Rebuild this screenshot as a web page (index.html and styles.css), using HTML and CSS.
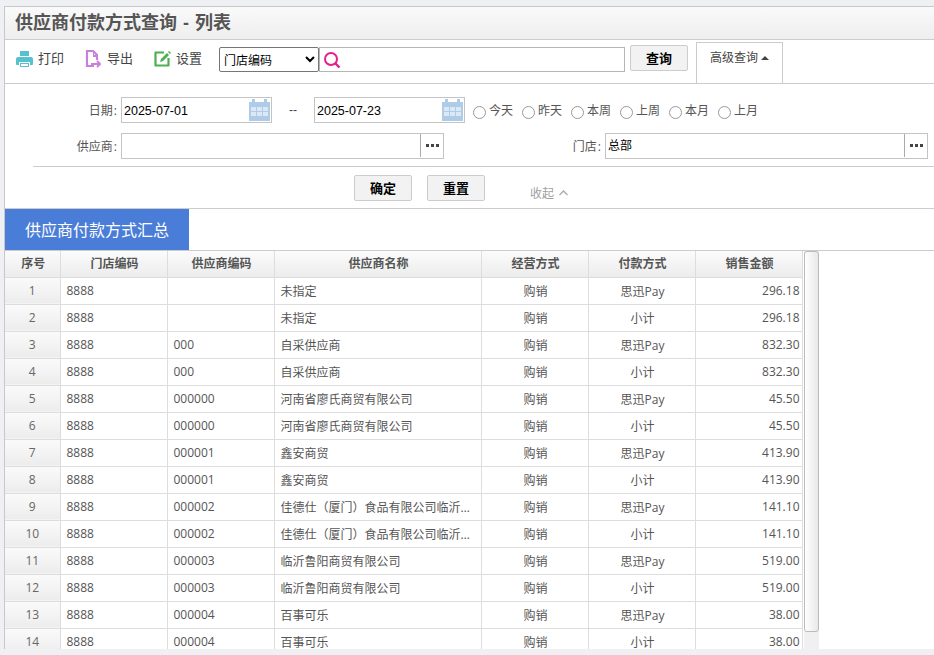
FILE: index.html
```html
<!DOCTYPE html>
<html lang="zh-CN">
<head>
  <meta charset="UTF-8" />
  <title>供应商付款方式查询 - 列表</title>
  <link rel="stylesheet" href="styles.css">
</head>
<body>
  <div class="page">
    <div class="title-bar">供应商付款方式查询 - 列表</div>

    <div class="toolbar">
      <a class="tool tool-print">
        <svg width="17" height="18" viewBox="0 0 17 18"><path fill="#56c2ce" d="M4 1h9v5H4zM2 7h13a2 2 0 0 1 2 2v5a1 1 0 0 1-1 1h-2v-3H3v3H1a1 1 0 0 1-1-1V9a2 2 0 0 1 2-2z"/><path fill="#56c2ce" d="M4 13h9v4H4z"/><path fill="#fff" d="M5 14h7v2H5z"/></svg>
        打印
      </a>
      <a class="tool tool-export">
        <svg width="17" height="18" viewBox="0 0 17 18"><path fill="none" stroke="#c97fdc" stroke-width="2.200" d="M9 16H2V1h6l4 4v5"/><path fill="#c97fdc" d="M8 1h1v4h4v2H8z"/><path fill="none" stroke="#c97fdc" stroke-width="2" d="M6 14h8M12 11l3 3-3 3"/></svg>
        导出
      </a>
      <a class="tool tool-setting">
        <svg width="17" height="18" viewBox="0 0 17 18"><path fill="none" stroke="#4caf50" stroke-width="2.200" stroke-linejoin="round" d="M10 2.500H1.500v13h13V8"/><path fill="#4caf50" d="M6 12l1-3 6-6 2 2-6 6zM14 2l1-1 2 2-1 1z"/></svg>
        设置
      </a>
      <select class="field-select">
        <option>门店编码</option>
      </select>
      <div class="search-box">
        <svg width="18" height="18" viewBox="0 0 18 18"><circle cx="8" cy="8" r="6" fill="none" stroke="#e5208c" stroke-width="2"/><path stroke="#e5208c" stroke-width="2.400" d="M12 12l4.500 4.500"/></svg>
      </div>
      <button class="btn btn-query">查询</button>
      <div class="adv-tab">高级查询<span class="caret"></span></div>
    </div>

    <div class="filter">
      <div class="filter-row row-date">
        <label class="filter-label">日期<span class="colon">:</span></label>
        <div class="date-input">
          2025-07-01
          <svg class="cal" width="21" height="22" viewBox="0 0 21 22"><path fill="#aecce8" d="M0 3h3V0h3v3h9V0h3v3h3v19H0z"/><path fill="#dce9f5" d="M2 8h5v4H2zM8 8h5v4H8zM14 8h5v4h-5zM2 13h5v4H2zM8 13h5v4H8zM14 13h5v4h-5z"/></svg>
        </div>
        <span class="date-sep">--</span>
        <div class="date-input">
          2025-07-23
          <svg class="cal" width="21" height="22" viewBox="0 0 21 22"><path fill="#aecce8" d="M0 3h3V0h3v3h9V0h3v3h3v19H0z"/><path fill="#dce9f5" d="M2 8h5v4H2zM8 8h5v4H8zM14 8h5v4h-5zM2 13h5v4H2zM8 13h5v4H8zM14 13h5v4h-5z"/></svg>
        </div>
        <div class="radios">
          <label class="radio"><input type="radio" name="range">今天</label>
          <label class="radio"><input type="radio" name="range">昨天</label>
          <label class="radio"><input type="radio" name="range">本周</label>
          <label class="radio"><input type="radio" name="range">上周</label>
          <label class="radio"><input type="radio" name="range">本月</label>
          <label class="radio"><input type="radio" name="range">上月</label>
        </div>
      </div>

      <div class="filter-row row-pick">
        <label class="filter-label">供应商<span class="colon">:</span></label>
        <div class="pick-input">
          <span class="pick-text"></span>
          <span class="pick-btn"><svg width="13" height="3" viewBox="0 0 13 3"><path fill="#444" d="M0 0h3v3H0zM5 0h3v3H5zM10 0h3v3h-3z"/></svg></span>
        </div>
        <label class="filter-label label-store">门店<span class="colon">:</span></label>
        <div class="pick-input">
          <span class="pick-text">总部</span>
          <span class="pick-btn"><svg width="13" height="3" viewBox="0 0 13 3"><path fill="#444" d="M0 0h3v3H0zM5 0h3v3H5zM10 0h3v3h-3z"/></svg></span>
        </div>
      </div>

      <div class="filter-actions">
        <button class="btn">确定</button>
        <button class="btn">重置</button>
        <span class="collapse">收起<svg width="9" height="6" viewBox="0 0 9 6"><path fill="none" stroke="#aaa" stroke-width="1.300" d="M.5 5l4-4 4 4"/></svg></span>
      </div>
    </div>

    <div class="tab-bar"><div class="tab-active">供应商付款方式汇总</div></div>

    <div class="grid-wrap">
      <table class="grid">
        <colgroup>
          <col class="c-no"><col class="c-code"><col class="c-code"><col class="c-name"><col class="c-code"><col class="c-code"><col class="c-code">
        </colgroup>
        <thead>
          <tr><th>序号</th><th>门店编码</th><th>供应商编码</th><th>供应商名称</th><th>经营方式</th><th>付款方式</th><th>销售金额</th></tr>
        </thead>
        <tbody id="rows"></tbody>
      </table>
      <div class="scroll-track"><div class="scroll-thumb"></div></div>
    </div>
  </div>

  <script>
    var data = [
      ["", "未指定", "296.18"],
      ["000", "自采供应商", "832.30"],
      ["000000", "河南省廖氏商贸有限公司", "45.50"],
      ["000001", "鑫安商贸", "413.90"],
      ["000002", "佳德仕（厦门）食品有限公司临沂分公司", "141.10"],
      ["000003", "临沂鲁阳商贸有限公司", "519.00"],
      ["000004", "百事可乐", "38.00"]
    ];
    var html = "";
    var no = 1;
    data.forEach(function (d) {
      ["思迅Pay", "小计"].forEach(function (pay) {
        html += "<tr><td class='no'>" + no + "</td><td>8888</td><td>" + d[0] + "</td>" +
          "<td class='name'>" + d[1] + "</td><td class='mid'>购销</td>" +
          "<td class='mid'>" + pay + "</td><td class='amt'>" + d[2] + "</td></tr>";
        no++;
      });
    });
    document.getElementById("rows").innerHTML = html;
  </script>
</body>
</html>
```

FILE: styles.css
```css
* {
  box-sizing: border-box;
}

html, body {
  margin: 0;
  height: 655px;
  overflow: hidden;
}

body {
  background-color: #eff0f4;
  padding: 6px 0 6px 4px;
  font-family: "Open Sans", "Noto Sans CJK SC", sans-serif;
  font-size: 12px;
  color: #555;
}

.page {
  height: 643px;
  background-color: white;
  border-top: 1px solid #c8c8c8;
  border-left: 1px solid #c8c8c8;
  overflow: hidden;
}

.title-bar {
  height: 33px;
  line-height: 33px;
  padding-left: 10px;
  font-family: "Liberation Sans", "Noto Sans CJK SC", sans-serif;
  font-size: 18px;
  font-weight: bold;
  word-spacing: 1px;
  color: #555;
  background: linear-gradient(#fafafa, #eeeeee);
  border-bottom: 1px solid #ccc;
}

.toolbar {
  height: 44px;
  display: flex;
  align-items: flex-start;
  border-bottom: 1px solid #ccc;
}

.tool {
  display: flex;
  align-items: center;
  gap: 5px;
  height: 17px;
  margin-top: 10px;
  font-size: 13px;
  line-height: 17px;
  color: #444;
}

.tool-print { margin-left: 11px; }
.tool-export { margin-left: 21px; }
.tool-setting { margin-left: 21px; }

.field-select {
  width: 100px;
  height: 25px;
  margin: 7px 0 0 17px;
  font-family: "Noto Sans CJK SC", sans-serif;
  font-size: 12px;
  color: black;
  background-color: white;
  border: 1px solid #767676;
  border-radius: 2px;
}

.search-box {
  width: 306px;
  height: 25px;
  margin-top: 7px;
  padding: 3px 0 0 3px;
  border: 1px solid #b5b5b5;
}

.btn {
  width: 58px;
  height: 26px;
  padding: 0 0 2px;
  font-family: "Noto Sans CJK SC", sans-serif;
  font-size: 13px;
  font-weight: bold;
  color: black;
  background-color: #f2f2f2;
  border: 1px solid #ccc;
  border-radius: 2px;
}

.btn-query {
  margin: 5px 0 0 5px;
}

.adv-tab {
  width: 87px;
  height: 41px;
  margin: 2px 0 0 8px;
  padding: 5px 0 0 13px;
  line-height: 18px;
  color: #444;
  font-family: "Noto Sans CJK SC", sans-serif;
  border: 1px solid #ccc;
  border-bottom: none;
  background-color: white;
}

.caret {
  display: inline-block;
  margin-left: 3px;
  vertical-align: 2px;
  border-left: 4px solid transparent;
  border-right: 4px solid transparent;
  border-bottom: 4px solid #444;
}

.filter {
  height: 125px;
  border-bottom: 1px solid #ccc;
  padding-top: 13px;
}

.filter-row {
  display: flex;
  align-items: center;
  height: 26px;
}

.filter-label {
  width: 116px;
  padding-right: 4px;
  text-align: right;
  color: #555;
  font-size: 12px;
}

.colon {
  margin-left: 1px;
}

.date-input {
  position: relative;
  width: 151px;
  height: 26px;
  padding-left: 2px;
  line-height: 26px;
  font-family: "Liberation Sans", sans-serif;
  font-size: 12.5px;
  color: black;
  border: 1px solid #c4c4c4;
}

.cal {
  position: absolute;
  top: 1px;
  right: 1px;
}

.date-sep {
  width: 42px;
  text-align: center;
  font-family: "Liberation Sans", sans-serif;
  color: #444;
}

.radios {
  display: flex;
  margin-left: 8px;
}

.radio {
  display: flex;
  align-items: center;
  width: 49px;
  font-size: 12px;
  color: #555;
}

.radio input {
  appearance: none;
  width: 13px;
  height: 13px;
  margin: 5px 3px 0 0;
  border: 1px solid #999;
  border-radius: 50%;
}

.row-pick {
  margin-top: 10px;
}

.pick-input {
  display: flex;
  width: 323px;
  height: 26px;
  border: 1px solid #c4c4c4;
  font-size: 12px;
  color: black;
}

.pick-text {
  flex: 1;
  padding-left: 2px;
  line-height: 24px;
}

.pick-btn {
  display: flex;
  align-items: center;
  justify-content: center;
  width: 23px;
  margin-bottom: 1px;
  border-left: 1px solid #aaa;
}

.label-store {
  width: 161px;
}

.filter-actions {
  display: flex;
  align-items: flex-start;
  margin: 7px 0 0 28px;
  padding: 8px 0 0 321px;
  border-top: 1px solid #ccc;
  gap: 15px;
}

.collapse {
  display: flex;
  align-items: center;
  gap: 5px;
  margin: 9px 0 0 30px;
  color: #a0a0a0;
}

.tab-bar {
  height: 42px;
  border-bottom: 1px solid #ccc;
}

.tab-active {
  width: 184px;
  height: 41px;
  padding-top: 1px;
  line-height: 41px;
  text-align: center;
  font-size: 16px;
  color: white;
  background-color: #4a7dd8;
}

.grid-wrap {
  display: flex;
  align-items: flex-start;
}

.grid {
  width: 797px;
  table-layout: fixed;
  border-collapse: collapse;
  flex: none;
}

.c-no { width: 55px; }
.c-code { width: 107px; }
.c-name { width: 207px; }

.grid th, .grid td {
  height: 27px;
  padding: 0 4px 0 6px;
  border-right: 1px solid #ddd;
  border-bottom: 1px solid #ddd;
  font-size: 12px;
  white-space: nowrap;
  overflow: hidden;
  text-overflow: ellipsis;
}

.grid th {
  height: 26px;
  padding-bottom: 2px;
  text-align: center;
  font-weight: bold;
  color: #555;
  background: linear-gradient(#fbfbfb, #ececec);
}

.grid td.no {
  padding: 0 5px;
  text-align: center;
  color: #666;
  background: linear-gradient(#fafafa, #ececec);
}

.grid td.name {
  padding-right: 10px;
}

.grid td.mid {
  text-align: center;
}

.grid td.amt {
  padding-right: 2px;
  text-align: right;
}

.scroll-track {
  width: 15px;
  height: 398px;
  margin-left: 1px;
  background-color: #f0f0f0;
}

.scroll-thumb {
  width: 15px;
  height: 381px;
  background: linear-gradient(to right, #fff, #e8e8e8);
  border: 1px solid #bbb;
  border-radius: 3px;
}
```
